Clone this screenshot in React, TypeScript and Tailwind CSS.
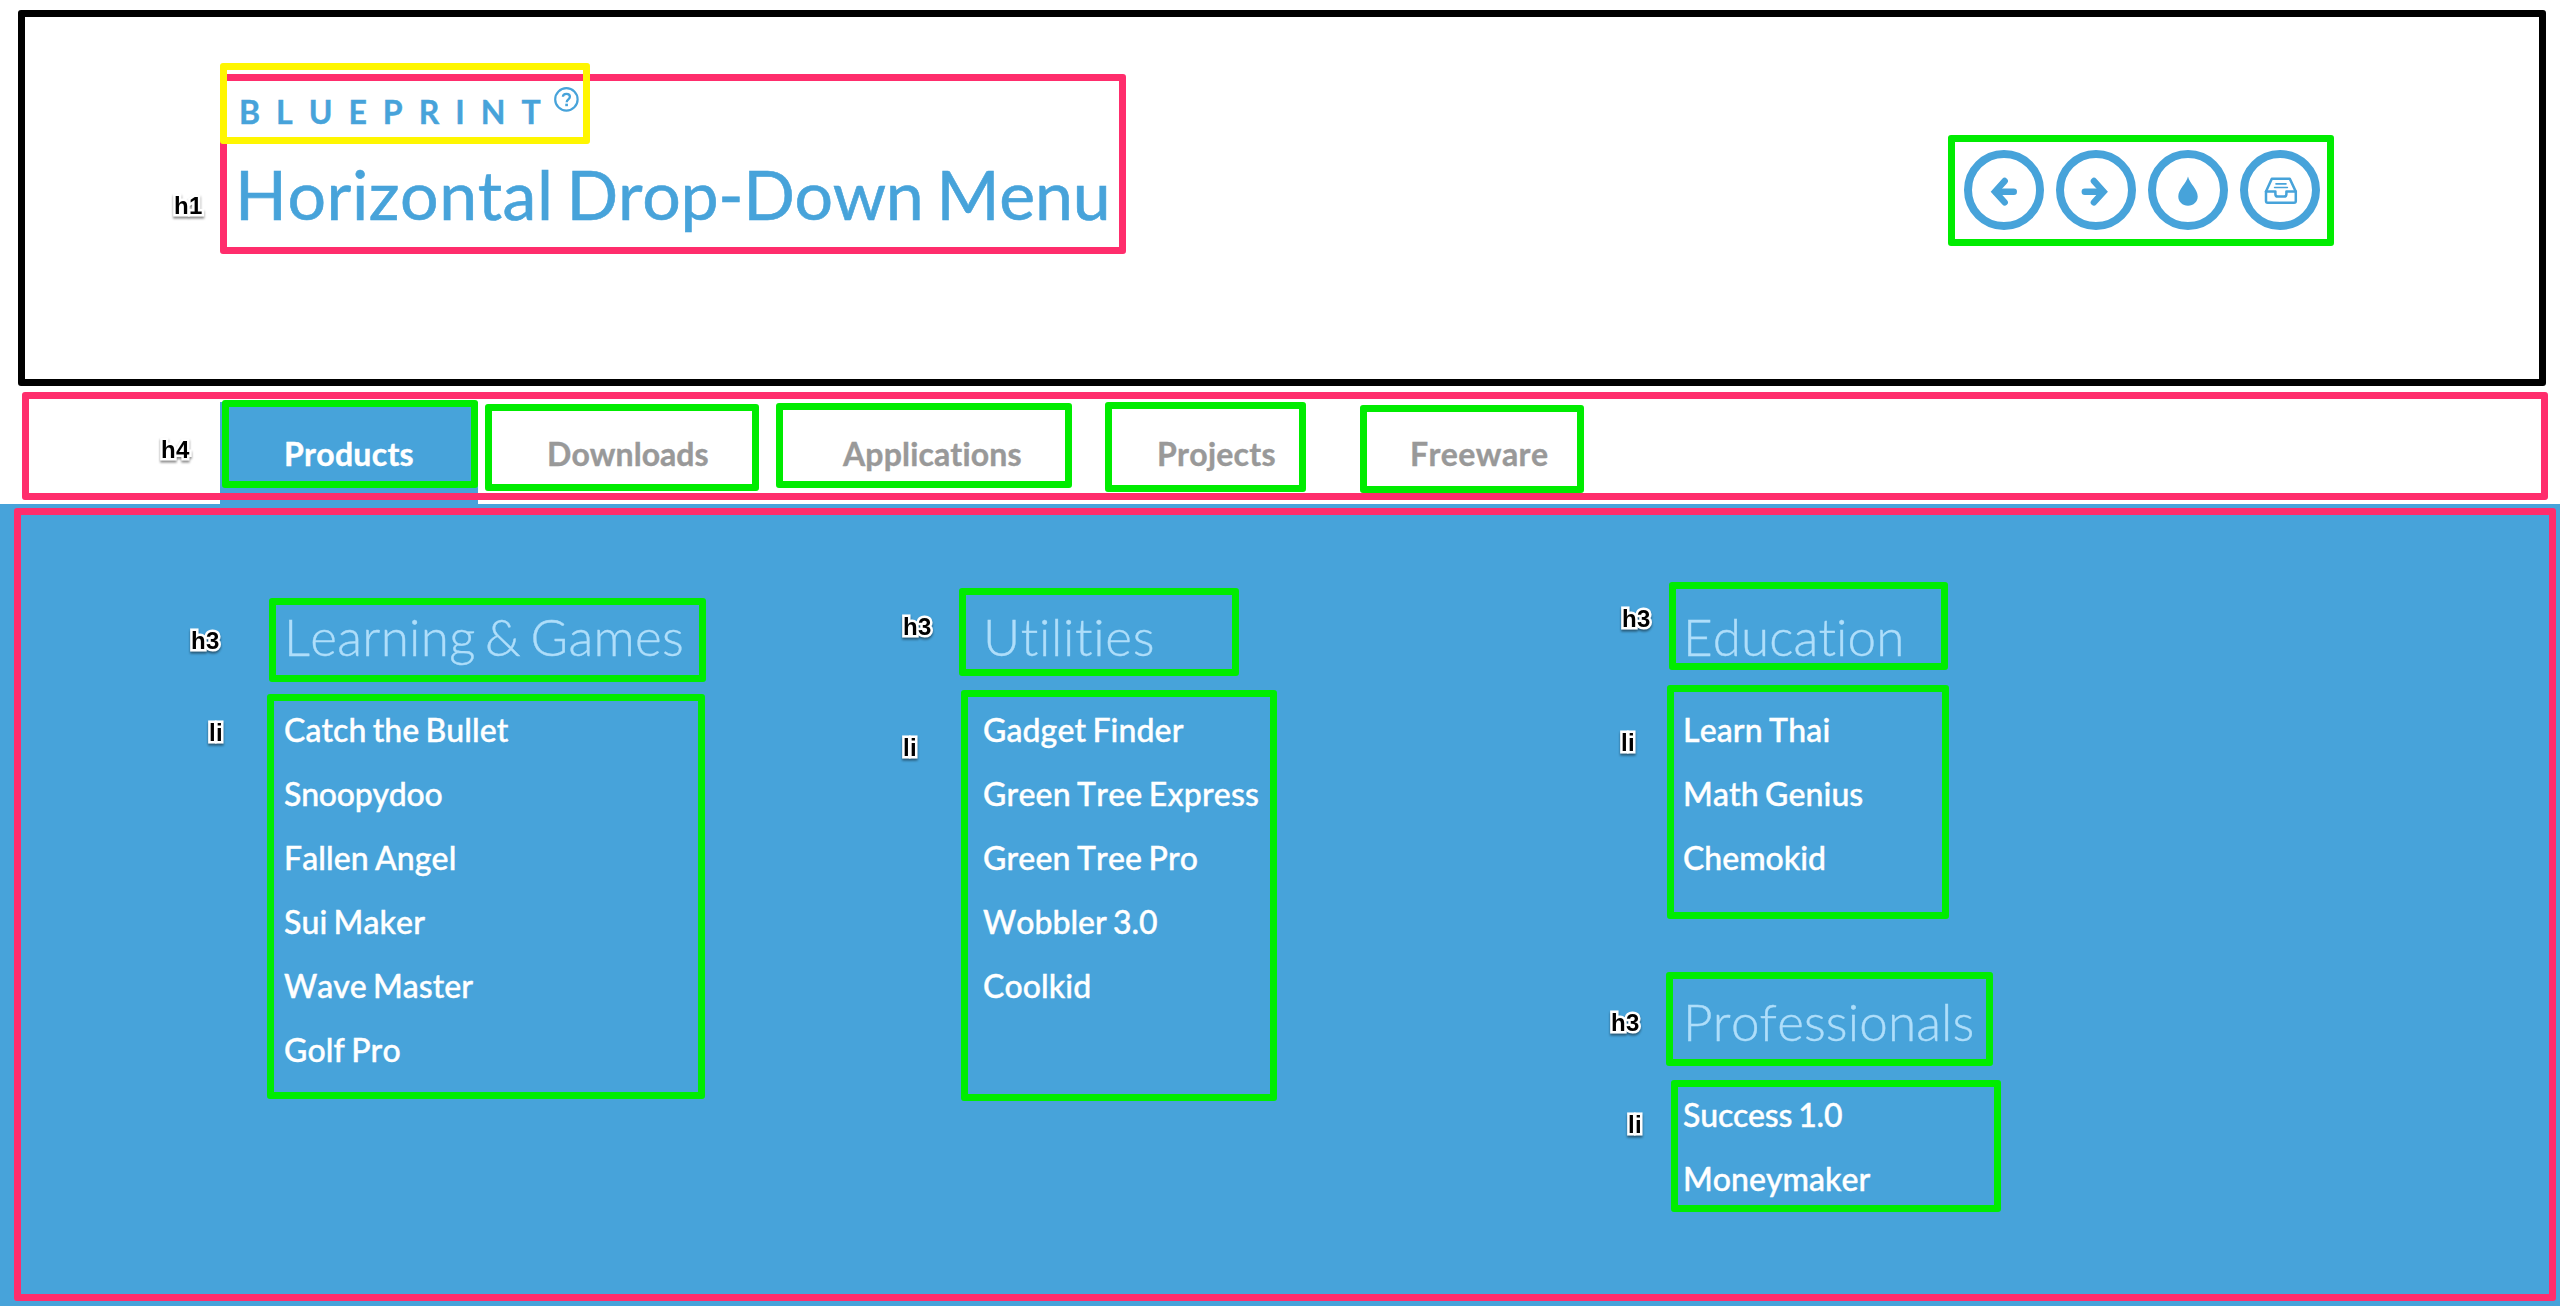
import React from 'react';

const tabs = [
  ['Downloads', 'w-[296px] tracking-[0.05px]'],
  ['Applications', 'w-[314px] tracking-[0.15px]'],
  ['Projects', 'w-[253px] tracking-[0.25px]'],
  ['Freeware', 'w-[264px] tracking-[0.41px]'],
];

type Entry = [text: string, tracking?: string];

const columns: { title: Entry; items: Entry[] }[][] = [
  [
    {
      title: ['Learning & Games', 'tracking-[0.3px] [word-spacing:-4.8px]'],
      items: [
        ['Catch the Bullet', 'tracking-[0.06px]'],
        ['Snoopydoo', 'tracking-[-0.26px]'],
        ['Fallen Angel', 'tracking-[0.08px]'],
        ['Sui Maker', 'tracking-[0.08px]'],
        ['Wave Master'],
        ['Golf Pro', 'tracking-[0.1px]'],
      ],
    },
  ],
  [
    {
      title: ['Utilities', 'tracking-[0.65px]'],
      items: [
        ['Gadget Finder', 'tracking-[0.1px]'],
        ['Green Tree Express', 'tracking-[0.18px]'],
        ['Green Tree Pro', 'tracking-[0.15px]'],
        ['Wobbler 3.0'],
        ['Coolkid', 'tracking-[0.1px]'],
      ],
    },
  ],
  [
    {
      title: ['Education', 'tracking-[0.1px]'],
      items: [['Learn Thai', 'tracking-[0.15px]'], ['Math Genius', 'tracking-[0.1px]'], ['Chemokid']],
    },
    {
      title: ['Professionals', 'tracking-[0.12px]'],
      items: [['Success 1.0', 'tracking-[-0.2px]'], ['Moneymaker', 'tracking-[0.02px]']],
    },
  ],
];

// Outlines drawn over the page around each annotated element.
const outlines = [
  'border-black left-[18px] top-[10px] w-[2528px] h-[376px]',
  'border-[#ff2d6c] left-[22px] top-[392px] w-[2526px] h-[108px]',
  'border-[#ff2d6c] left-[14px] top-[508px] w-[2542px] h-[793px]',
  'border-[#ff2d6c] left-[220px] top-[74px] w-[906px] h-[180px]',
  'border-[#fff600] left-[220px] top-[63px] w-[370px] h-[81px]',
  'border-[#00ec00] left-[1948px] top-[135px] w-[386px] h-[111px]',
  'border-[#00ec00] left-[222px] top-[400px] w-[256px] h-[88px]',
  'border-[#00ec00] left-[485px] top-[404px] w-[274px] h-[87px]',
  'border-[#00ec00] left-[776px] top-[403px] w-[296px] h-[85px]',
  'border-[#00ec00] left-[1105px] top-[402px] w-[201px] h-[90px]',
  'border-[#00ec00] left-[1360px] top-[405px] w-[224px] h-[88px]',
  'border-[#00ec00] left-[269px] top-[598px] w-[437px] h-[84px]',
  'border-[#00ec00] left-[267px] top-[694px] w-[438px] h-[405px]',
  'border-[#00ec00] left-[959px] top-[588px] w-[280px] h-[88px]',
  'border-[#00ec00] left-[961px] top-[690px] w-[316px] h-[411px]',
  'border-[#00ec00] left-[1669px] top-[582px] w-[279px] h-[88px]',
  'border-[#00ec00] left-[1667px] top-[685px] w-[282px] h-[234px]',
  'border-[#00ec00] left-[1666px] top-[972px] w-[327px] h-[94px]',
  'border-[#00ec00] left-[1671px] top-[1080px] w-[330px] h-[132px]',
];

const labels = [
  ['h1', 'left-[174px] top-[194px]'],
  ['h4', 'left-[161px] top-[438px]'],
  ['h3', 'left-[191px] top-[629px]'],
  ['li', 'left-[209px] top-[721px]'],
  ['h3', 'left-[903px] top-[615px]'],
  ['li', 'left-[903px] top-[736px]'],
  ['h3', 'left-[1622px] top-[607px]'],
  ['li', 'left-[1621px] top-[731px]'],
  ['h3', 'left-[1611px] top-[1011px]'],
  ['li', 'left-[1628px] top-[1113px]'],
];

function HelpIcon() {
  return (
    <svg className="-ml-[3px] -mt-[5px] size-[25px]" viewBox="0 0 25 25" fill="none" stroke="currentColor">
      <circle cx="12.4" cy="12.4" r="11.2" strokeWidth="2.2" />
      <path d="M8.9 9.8C9 7.7 10.4 6.8 12.4 6.8c2 0 3.5 1.1 3.5 3 0 2.4-3.2 2.6-3.2 5.4" strokeWidth="2.3" />
      <path d="M12.6 16.7v2.5" strokeWidth="2.7" />
    </svg>
  );
}

function ArrowLeftIcon() {
  return (
    <g strokeWidth="6.4" strokeLinecap="round" strokeLinejoin="miter">
      <path d="M40.7 31 31 41.7l9.7 10.7" />
      <path d="M32 41.7h17.8" />
    </g>
  );
}

const actions = [
  { name: 'Previous', art: <ArrowLeftIcon /> },
  { name: 'Next', art: <g transform="matrix(-1 0 0 1 78.6 0)"><ArrowLeftIcon /></g> },
  {
    name: 'Article',
    art: <path stroke="none" fill="currentColor" d="M40 26.5c1.5 7 9.7 12.6 9.7 20 0 5.4-4.2 9.2-9.7 9.2s-9.7-3.8-9.7-9.2c0-7.4 8.2-13 9.7-20z" />,
  },
  {
    name: 'Archive',
    art: (
      <g strokeWidth="2.5" strokeLinejoin="round" strokeLinecap="round">
        <path d="M26 41.6 31.8 28.8h18L55.8 41.6" />
        <path d="M26 41.6v9.4q0 1.8 1.8 1.8h26.2q1.8 0 1.8-1.8v-9.4h-9.4v2.6q0 2.4-2.4 2.4h-6.2q-2.4 0-2.4-2.4v-2.6z" />
        <path d="M36 33.9h10M34.6 37.5h12.8" strokeWidth="1.6" />
      </g>
    ),
  },
];

export default function App() {
  return (
    <div className="relative flex h-[1306px] w-[2560px] flex-col overflow-hidden bg-white font-['Lato',sans-serif] text-[#47a3da] [font-kerning:none] [font-variant-ligatures:none]">
      <header className="flex h-[402px] shrink-0 items-start justify-between pl-[235px] pr-60">
        <div className="pt-[92px]">
          <div className="flex h-[58px] items-start pl-1">
            <span className="text-[32px] font-bold leading-10 tracking-[16px] [-webkit-text-stroke:0.4px]">BLUEPRINT</span>
            <HelpIcon />
          </div>
          <h1 className="whitespace-nowrap text-[68px] leading-[88px] [word-spacing:-4.4px] [-webkit-text-stroke:0.6px]">
            <span className="tracking-[0.55px]">Horizontal</span> <span className="tracking-[-0.35px]">Drop-Down</span>{' '}
            <span className="tracking-[-0.25px]">Menu</span>
          </h1>
        </div>
        <div className="flex gap-3 pt-[150px]">
          {actions.map((a) => (
            <a key={a.name} aria-label={a.name} className="size-20 rounded-full border-8 border-[#47a3da]">
              <svg className="-m-2 size-20 max-w-none" viewBox="0 0 80 80" fill="none" stroke="currentColor">
                {a.art}
              </svg>
            </a>
          ))}
        </div>
      </header>

      <nav className="flex h-[102px] shrink-0 pl-[220px] text-[32px] font-bold leading-[104px] text-[#999] [-webkit-text-stroke:0.4px]">
        <a className="mr-[5px] w-[258px] bg-[#47a3da] pl-16 tracking-[0.27px] text-white">Products</a>
        {tabs.map(([name, size]) => (
          <a key={name} className={`pl-16 ${size}`}>{name}</a>
        ))}
      </nav>

      <main className="grid flex-1 grid-cols-[699px_700px_700px] bg-[#47a3da] pl-[284px] pt-[101px] text-white [-webkit-text-stroke:0.4px]">
        {columns.map((groups, i) => (
          <div key={i} className="flex flex-col gap-[100px]">
            {groups.map(({ title: [title, titleTracking = ''], items }) => (
              <section key={title}>
                <h3 className={`mb-[31px] text-[51.2px] font-light leading-[62px] text-[#afdefa] ${titleTracking}`}>{title}</h3>
                <ul className="text-[32px] font-medium leading-[64px] [word-spacing:-1.9px]">
                  {items.map(([item, tracking = '']) => (
                    <li key={item} className={tracking}>{item}</li>
                  ))}
                </ul>
              </section>
            ))}
          </div>
        ))}
      </main>

      {outlines.map((o) => (
        <div key={o} className={`pointer-events-none absolute rounded-[3px] border-[7px] ${o}`} />
      ))}
      {labels.map(([text, place]) => (
        <span
          key={place}
          className={`absolute font-['Liberation_Sans',sans-serif] text-[24px] font-bold leading-6 tracking-[0.4px] text-black drop-shadow-[0_2px_1px_rgba(0,0,0,0.45)] [-webkit-text-stroke:5px_white] [paint-order:stroke_fill] ${place}`}
        >
          {text}
        </span>
      ))}
    </div>
  );
}
